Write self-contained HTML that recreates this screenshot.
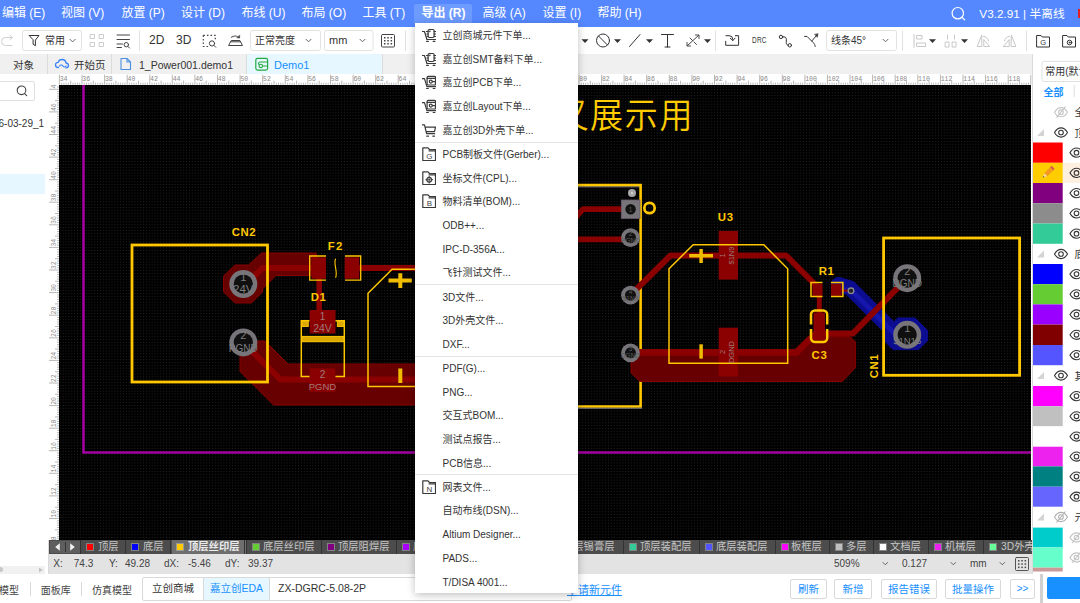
<!DOCTYPE html>
<html lang="zh-CN">
<head>
<meta charset="utf-8">
<title>EDA</title>
<style>
*{box-sizing:border-box;margin:0;padding:0}
html,body{width:1080px;height:603px;overflow:hidden;background:#fff}
body{position:relative;font-family:"Liberation Sans","Noto Sans CJK SC",sans-serif;font-size:12px;color:#333}
.abs{position:absolute}
#menubar{left:0;top:0;width:1080px;height:26.500px;background:#5588ff;color:#fff;font-size:12px}
#menubar span{position:absolute;top:0;height:27px;line-height:27.500px;white-space:nowrap}
#toolbar{left:0;top:26.500px;width:1080px;height:27.700px;background:#fff;color:#333}
#toolbar span{position:absolute;top:0;height:27px;line-height:27px;white-space:nowrap}
#tabbar{left:0;top:54.300px;width:1032px;height:20px;background:#f0f0f0;font-size:12px}
#tabbar .tab{position:absolute;top:0;height:20px;line-height:22px;white-space:nowrap;border-right:1px solid #dcdcdc}
#leftpanel{left:0;top:74px;width:49px;height:500px;background:#fff;border-right:1px solid #d9d9d9}
#hruler{left:48px;top:74.300px;width:984px;height:11px;background:#fff;overflow:hidden}
#vruler{left:48px;top:85px;width:11px;height:455px;background:#fff;overflow:hidden}
#canvas{left:59px;top:85px;width:972px;height:455px;background:#000;overflow:hidden}
#layerbar{left:49px;top:540px;width:983px;height:13.500px;background:#4c4c4c;color:#c6c6c6;font-size:10.300px;overflow:hidden}
#layerbar span{position:absolute;top:0;height:14px;line-height:14px;white-space:nowrap}
#layerbar i{position:absolute;top:3.600px;width:6.400px;height:6.400px;outline:0.500px solid rgba(255,255,255,.3)}
#layerbar b{position:absolute;top:0;width:1px;height:14px;background:#333}
#statusbar{left:49px;top:553.500px;width:983px;height:20px;background:#e3e3e3;font-size:10px;color:#444}
#statusbar span{position:absolute;top:0;height:20px;line-height:19px;white-space:nowrap}
#bottom{left:0;top:574px;width:1080px;height:29px;background:#fff;font-size:12px}
#bottom span{position:absolute;white-space:nowrap}
#bottom .btn{border:1px solid #d9d9d9;color:#1890ff;text-align:center;top:5px;height:20px;line-height:18px;border-radius:2px;background:#fff}
#rightpanel{left:1032px;top:54px;width:48px;height:520px;background:#fff;border-left:1px solid #d9d9d9;overflow:hidden}
#dropdown{left:415px;top:23px;width:163px;height:570px;background:#fff;box-shadow:0 2px 8px rgba(0,0,0,.25);font-size:10px;color:#333}
#dropdown div.it{position:absolute;left:0;width:163px;height:24px;line-height:26px;padding-left:27.5px;white-space:nowrap}
#dropdown svg.ic{position:absolute;left:7px;top:5px;fill:none;stroke:#3a3a3a;stroke-width:1.200;stroke-linecap:round;stroke-linejoin:round}
#dropdown div.sep{position:absolute;left:0;width:163px;height:1px;background:#e4e4e4}
</style>
</head>
<body>
<div id="menubar" class="abs">
<span style="left:2px">编辑 (E)</span>
<span style="left:61px">视图 (V)</span>
<span style="left:121.500px">放置 (P)</span>
<span style="left:181px">设计 (D)</span>
<span style="left:241.500px">布线 (U)</span>
<span style="left:301.500px">布局 (O)</span>
<span style="left:362.500px">工具 (T)</span>
<span style="left:414px;width:57.500px;top:4px;height:20px;background:#6e9bff;border-radius:2px"></span>
<span style="left:421.500px;font-weight:bold">导出 (R)</span>
<span style="left:482.500px">高级 (A)</span>
<span style="left:542.500px">设置 (I)</span>
<span style="left:597.500px">帮助 (H)</span>
<span style="left:979.300px;font-size:11.750px">V3.2.91 | 半离线</span>
<svg class="abs" style="left:948px;top:4px" width="20" height="20" viewBox="948 4 20 20" fill="none" stroke="#fff" stroke-width="1.200" stroke-linecap="round"><circle cx="957.800" cy="13.200" r="5.700"/><path d="M962 17.400l2.600 2.400"/></svg>
<span style="left:1077.500px;top:9px;width:3px;height:8.500px;background:#e02020"></span>

</div><!--/menubar-->
<div id="toolbar" class="abs">
<svg class="abs" style="left:0;top:0" width="1080" height="27" viewBox="0 27 1080 27" fill="none" stroke="#333" stroke-width="1" stroke-linecap="round" stroke-linejoin="round">
<!-- redo (disabled) -->
<path d="M12 37.500H5.500a4 4 0 0 0 0 8H12M9.800 35.200l2.600 2.300l-2.600 2.300" stroke="#cfcfcf"/>
<!-- filter box -->
<rect x="22.5" y="30.5" width="59" height="20" rx="2" stroke="#e2e2e2" fill="#fff"/>
<path d="M29.5 35.5h9.5l-3.6 4.6v5.6l-2.3-1.4v-4.2z" stroke="#333"/>
<path d="M70 39.3l2.6 2.6l2.6-2.6" stroke="#555" stroke-width="0.9"/>
<!-- 4 squares (disabled) -->
<g stroke="#ccc"><rect x="90.5" y="34.5" width="4" height="4"/><rect x="99.5" y="34.5" width="4" height="4"/><rect x="90.5" y="42.5" width="4" height="4"/><rect x="99.5" y="42.5" width="4" height="4"/></g>
<!-- list search -->
<path d="M117 35h12.5M117 39.5h12.5M117 44h5.5M117 47.5h4.5" stroke="#444"/><circle cx="126.3" cy="44.7" r="2.2" stroke="#444"/><path d="M128 46.5l1.5 1.5" stroke="#444"/>
<path d="M139.5 31v19.5" stroke="#e0e0e0"/>
<!-- dashed rect search -->
<path d="M203.300 35.300h12v5M203.300 35.300v11.200h5" stroke="#444" stroke-dasharray="1.600 2" stroke-linecap="butt" stroke-width="1.200"/><circle cx="212" cy="43.400" r="2.600" stroke="#444"/><path d="M214 45.500l1.700 1.700" stroke="#444"/>
<!-- stamp -->
<path d="M231.600 40.500h8.300l2.600 5h-13.500zM231 41.800h9.500" stroke="#444"/><path d="M231.300 37.300c2.500-1.800 5.500-1.800 8 0.200" stroke="#444"/><path d="M239.700 35.300v2.600h-2.600z" fill="#444" stroke="#444" stroke-width="0.500"/>
<!-- selects -->
<rect x="250.500" y="30.500" width="70" height="20" rx="2" stroke="#e2e2e2"/>
<path d="M306 39.300l2.500 2.500l2.500-2.500" stroke="#555" stroke-width="0.9"/>
<rect x="324.500" y="30.500" width="48.500" height="20" rx="2" stroke="#e2e2e2"/>
<path d="M360 39.300l2.500 2.500l2.500-2.500" stroke="#555" stroke-width="0.9"/>
<!-- grid icon -->
<rect x="381.500" y="34.500" width="13" height="12.500" rx="1" stroke="#444"/>
<g fill="#444" stroke="none"><rect x="384" y="37" width="1.500" height="1.500"/><rect x="387.300" y="37" width="1.500" height="1.500"/><rect x="390.600" y="37" width="1.500" height="1.500"/><rect x="384" y="40" width="1.500" height="1.500"/><rect x="387.300" y="40" width="1.500" height="1.500"/><rect x="390.600" y="40" width="1.500" height="1.500"/><rect x="384" y="43" width="1.500" height="1.500"/><rect x="387.300" y="43" width="1.500" height="1.500"/><rect x="390.600" y="43" width="1.500" height="1.500"/></g>
<path d="M405.500 31v19.500" stroke="#e0e0e0"/>
<!-- right part -->
<g fill="#333" stroke="none"><path d="M581.5 39.300h7l-3.500 3.800z"/><path d="M614 39.300h7l-3.500 3.800z"/><path d="M646 39.300h7l-3.500 3.800z"/><path d="M704 39.300h7l-3.500 3.800z"/><path d="M929 39.300h7l-3.500 3.800z"/><path d="M961 39.300h7l-3.500 3.800z"/></g>
<circle cx="603" cy="40.500" r="6.500" stroke="#333"/><path d="M598.500 36l9 9" stroke="#333"/>
<path d="M629.500 46.500l10.500-12" stroke="#333"/>
<path d="M661.500 34.500h12M667.500 34.500v12.500M665 47h5" stroke="#333"/>
<path d="M687.500 45.500l11-10M687 42.500v3.500h3.500M695.500 35h3.500v3.500M690 38l2.500 2.500M694 42l2.500 2.500" stroke="#333" stroke-width="0.9"/>
<path d="M715.500 31v19.500" stroke="#e0e0e0"/>
<path d="M725.700 41.300V45.300H738.600V35.700H735.400M726 35.700h3a3.800 3.800 0 0 1 3.800 3.800v0.800M730.300 38.300l2.500 2.300l2.300-2.500" stroke="#333"/>
<path d="M782.700 36.900h1.300c1.500 0 2.300 0.800 2.300 2.300v3.500c0 1.600 0.800 2.500 1.900 2.600" stroke="#333"/><circle cx="781" cy="36.900" r="1.700" stroke="#333"/><circle cx="789.800" cy="45.300" r="1.700" stroke="#333"/>
<path d="M804.600 36.400h2.400l6.300 6.300c1.200 1.200 1.700 2.300 1.900 3.800M811.800 41l5-5.800" stroke="#333"/><path d="M818 33.900l-0.600 3.400l-2.700-2.700z" fill="#333" stroke="#333" stroke-width="0.500"/>
<rect x="826.500" y="30.500" width="70" height="20" rx="2" stroke="#e2e2e2"/>
<path d="M883 39.300l2.500 2.500l2.500-2.500" stroke="#555" stroke-width="0.9"/>
<path d="M902.500 31v19.500" stroke="#e0e0e0"/>
<g stroke="#c8c8c8"><path d="M914 34.500v13"/><rect x="917" y="35.500" width="5" height="3.500"/><rect x="917" y="43" width="8.500" height="3.500"/>
<path d="M947.500 35v4M954.500 35v4"/><rect x="945.500" y="42" width="3.500" height="5"/><rect x="952.500" y="42" width="3.500" height="5"/>
<path d="M981.500 35.500l-4.300 11h4.300zM983.800 40v6.500h5.500z"/><path d="M983.300 36.200c2.800 0.300 4.800 2.200 5.300 4.800"/>
<path d="M1011.500 35.500l4.300 11h-4.300zM1009.200 40v6.500h-5.500z"/><path d="M1009.700 36.200c-2.800 0.300-4.800 2.200-5.300 4.800"/></g>
<path d="M1026.500 31v19.500" stroke="#e0e0e0"/>
<path d="M1037 35.500h4l1.200 1.500h7.300v10h-12.500z" stroke="#333"/>
<path d="M1063 35.500h4l1.200 1.500h7.300v10h-12.500z" stroke="#333"/><circle cx="1069.500" cy="42.500" r="2.300" stroke="#333"/><circle cx="1069.500" cy="42.500" r="0.500" stroke="#333"/>
</svg>
<span style="left:45px;font-size:10px">常用</span>
<span style="left:149px;font-size:12px;letter-spacing:0.2px;color:#333">2D</span>
<span style="left:176px;font-size:12px;letter-spacing:0.2px;color:#333">3D</span>
<span style="left:255px;font-size:10px">正常亮度</span>
<span style="left:329px;font-size:11px">mm</span>
<span style="left:751.800px;font-size:9px;transform:scaleX(0.720);transform-origin:0 50%;font-family:'Liberation Sans',sans-serif;letter-spacing:0.300px">DRC</span>
<span style="left:831px;font-size:10px">线条45°</span>
<span style="left:1040.300px;font-size:7.500px;top:2.500px">G</span>

</div><!--/toolbar-->
<div id="tabbar" class="abs">
<div class="tab" style="left:0;width:48px;text-align:center;font-size:10.500px">对象</div>
<div class="tab" style="left:48px;width:64px;font-size:10.500px;padding-left:26px">开始页</div>
<div class="tab" style="left:112px;width:135px;font-size:10.500px;padding-left:27px">1_Power001.demo1</div>
<div class="tab" style="left:247px;width:136px;font-size:11px;padding-left:27px;background:#e6f7ff;color:#1890ff">Demo1</div>
<svg class="abs" style="left:0;top:0" width="400" height="20" viewBox="0 54 400 20" fill="none" stroke-linecap="round" stroke-linejoin="round">
<path d="M58.500 67.500c-2 0-3-1.200-3-2.600c0-1.500 1.200-2.600 2.700-2.500c0.500-1.800 2-2.900 3.800-2.900c2.200 0 3.800 1.500 4 3.500c1.500 0.200 2.500 1.200 2.500 2.500c0 1.400-1.200 2.300-2.500 2.300" stroke="#3b82f6" stroke-width="1.300"/>
<path d="M59.500 66c1-1.300 2.600-1.300 3.400 0c0.800 1.300 2.300 1.300 3.200 0" stroke="#3b82f6" stroke-width="1.200"/>
<path d="M121 58.500h6l3.500 3.500v7.500h-9.500z M127 58.500v3.500h3.500" stroke="#4a90e2" stroke-width="1.100"/>
<rect x="255.800" y="58.300" width="11.800" height="11.800" rx="1.800" stroke="#22aa44" stroke-width="1.200"/>
<path d="M267.600 62H260.300a1.800 1.800 0 0 0-1.800 1.800v0.500" stroke="#22aa44" stroke-width="1.100"/><circle cx="260.800" cy="66" r="1.700" stroke="#22aa44" stroke-width="1.100"/><path d="M262.600 66h5" stroke="#22aa44" stroke-width="1.100"/>
</svg>

</div><!--/tabbar-->
<div id="leftpanel" class="abs">
<div class="abs" style="left:-4px;top:7px;width:39px;height:20px;border:1px solid #e0e0e0;border-radius:2px"></div>
<svg class="abs" style="left:15px;top:10px" width="14" height="14" viewBox="0 0 14 14" fill="none" stroke="#444" stroke-width="1.100" stroke-linecap="round"><circle cx="6.500" cy="6.300" r="4.300"/><path d="M9.700 9.600l2 2"/></svg>
<div class="abs" style="left:-1.500px;top:43.500px;font-size:10px;line-height:12px;white-space:nowrap;color:#333">6-03-29_1</div>
<div class="abs" style="left:0;top:100px;width:45px;height:20px;background:#e6f7ff"></div>
<div class="abs" style="left:0;top:491.500px;width:45px;height:8px;background:#f1f1f1"></div>
<div class="abs" style="left:-3px;top:493px;width:5.500px;height:5px;background:#c8c8c8;border-radius:3px"></div>
<svg class="abs" style="left:38px;top:492.500px" width="6" height="6" viewBox="0 0 6 6"><path d="M1 0.500v5l4-2.500z" fill="#c4c4c4"/></svg>

</div><!--/leftpanel-->
<div id="hruler" class="abs">
<svg class="abs" style="left:0;top:0" width="984" height="11" viewBox="48 74.3 984 11" font-family="Liberation Mono,monospace" font-size="6.5" fill="#888">
<path d="M59.4 85v-10M61.7 85v-2M63.9 85v-2M66.2 85v-2M68.4 85v-2M70.7 85v-4M73.0 85v-2M75.2 85v-2M77.5 85v-2M79.7 85v-2M82.0 85v-10M84.2 85v-2M86.5 85v-2M88.8 85v-2M91.0 85v-2M93.3 85v-4M95.5 85v-2M97.8 85v-2M100.1 85v-2M102.3 85v-2M104.6 85v-10M106.8 85v-2M109.1 85v-2M111.4 85v-2M113.6 85v-2M115.9 85v-4M118.1 85v-2M120.4 85v-2M122.7 85v-2M124.9 85v-2M127.2 85v-10M129.4 85v-2M131.7 85v-2M133.9 85v-2M136.2 85v-2M138.5 85v-4M140.7 85v-2M143.0 85v-2M145.2 85v-2M147.5 85v-2M149.8 85v-10M152.0 85v-2M154.3 85v-2M156.5 85v-2M158.8 85v-2M161.1 85v-4M163.3 85v-2M165.6 85v-2M167.8 85v-2M170.1 85v-2M172.3 85v-10M174.6 85v-2M176.9 85v-2M179.1 85v-2M181.4 85v-2M183.6 85v-4M185.9 85v-2M188.2 85v-2M190.4 85v-2M192.7 85v-2M194.9 85v-10M197.2 85v-2M199.5 85v-2M201.7 85v-2M204.0 85v-2M206.2 85v-4M208.5 85v-2M210.8 85v-2M213.0 85v-2M215.3 85v-2M217.5 85v-10M219.8 85v-2M222.0 85v-2M224.3 85v-2M226.6 85v-2M228.8 85v-4M231.1 85v-2M233.3 85v-2M235.6 85v-2M237.9 85v-2M240.1 85v-10M242.4 85v-2M244.6 85v-2M246.9 85v-2M249.2 85v-2M251.4 85v-4M253.7 85v-2M255.9 85v-2M258.2 85v-2M260.5 85v-2M262.7 85v-10M265.0 85v-2M267.2 85v-2M269.5 85v-2M271.7 85v-2M274.0 85v-4M276.3 85v-2M278.5 85v-2M280.8 85v-2M283.0 85v-2M285.3 85v-10M287.6 85v-2M289.8 85v-2M292.1 85v-2M294.3 85v-2M296.6 85v-4M298.9 85v-2M301.1 85v-2M303.4 85v-2M305.6 85v-2M307.9 85v-10M310.1 85v-2M312.4 85v-2M314.7 85v-2M316.9 85v-2M319.2 85v-4M321.4 85v-2M323.7 85v-2M326.0 85v-2M328.2 85v-2M330.5 85v-10M332.7 85v-2M335.0 85v-2M337.3 85v-2M339.5 85v-2M341.8 85v-4M344.0 85v-2M346.3 85v-2M348.6 85v-2M350.8 85v-2M353.1 85v-10M355.3 85v-2M357.6 85v-2M359.8 85v-2M362.1 85v-2M364.4 85v-4M366.6 85v-2M368.9 85v-2M371.1 85v-2M373.4 85v-2M375.7 85v-10M377.9 85v-2M380.2 85v-2M382.4 85v-2M384.7 85v-2M387.0 85v-4M389.2 85v-2M391.5 85v-2M393.7 85v-2M396.0 85v-2M398.2 85v-10M400.5 85v-2M402.8 85v-2M405.0 85v-2M407.3 85v-2M409.5 85v-4M411.8 85v-2M414.1 85v-2M416.3 85v-2M418.6 85v-2M420.8 85v-10M423.1 85v-2M425.4 85v-2M427.6 85v-2M429.9 85v-2M432.1 85v-4M434.4 85v-2M436.7 85v-2M438.9 85v-2M441.2 85v-2M443.4 85v-10M445.7 85v-2M447.9 85v-2M450.2 85v-2M452.5 85v-2M454.7 85v-4M457.0 85v-2M459.2 85v-2M461.5 85v-2M463.8 85v-2M466.0 85v-10M468.3 85v-2M470.5 85v-2M472.8 85v-2M475.1 85v-2M477.3 85v-4M479.6 85v-2M481.8 85v-2M484.1 85v-2M486.4 85v-2M488.6 85v-10M490.9 85v-2M493.1 85v-2M495.4 85v-2M497.6 85v-2M499.9 85v-4M502.2 85v-2M504.4 85v-2M506.7 85v-2M508.9 85v-2M511.2 85v-10M513.5 85v-2M515.7 85v-2M518.0 85v-2M520.2 85v-2M522.5 85v-4M524.8 85v-2M527.0 85v-2M529.3 85v-2M531.5 85v-2M533.8 85v-10M536.0 85v-2M538.3 85v-2M540.6 85v-2M542.8 85v-2M545.1 85v-4M547.3 85v-2M549.6 85v-2M551.9 85v-2M554.1 85v-2M556.4 85v-10M558.6 85v-2M560.9 85v-2M563.2 85v-2M565.4 85v-2M567.7 85v-4M569.9 85v-2M572.2 85v-2M574.5 85v-2M576.7 85v-2M579.0 85v-10M581.2 85v-2M583.5 85v-2M585.7 85v-2M588.0 85v-2M590.3 85v-4M592.5 85v-2M594.8 85v-2M597.0 85v-2M599.3 85v-2M601.6 85v-10M603.8 85v-2M606.1 85v-2M608.3 85v-2M610.6 85v-2M612.9 85v-4M615.1 85v-2M617.4 85v-2M619.6 85v-2M621.9 85v-2M624.1 85v-10M626.4 85v-2M628.7 85v-2M630.9 85v-2M633.2 85v-2M635.4 85v-4M637.7 85v-2M640.0 85v-2M642.2 85v-2M644.5 85v-2M646.7 85v-10M649.0 85v-2M651.3 85v-2M653.5 85v-2M655.8 85v-2M658.0 85v-4M660.3 85v-2M662.6 85v-2M664.8 85v-2M667.1 85v-2M669.3 85v-10M671.6 85v-2M673.8 85v-2M676.1 85v-2M678.4 85v-2M680.6 85v-4M682.9 85v-2M685.1 85v-2M687.4 85v-2M689.7 85v-2M691.9 85v-10M694.2 85v-2M696.4 85v-2M698.7 85v-2M701.0 85v-2M703.2 85v-4M705.5 85v-2M707.7 85v-2M710.0 85v-2M712.3 85v-2M714.5 85v-10M716.8 85v-2M719.0 85v-2M721.3 85v-2M723.5 85v-2M725.8 85v-4M728.1 85v-2M730.3 85v-2M732.6 85v-2M734.8 85v-2M737.1 85v-10M739.4 85v-2M741.6 85v-2M743.9 85v-2M746.1 85v-2M748.4 85v-4M750.7 85v-2M752.9 85v-2M755.2 85v-2M757.4 85v-2M759.7 85v-10M761.9 85v-2M764.2 85v-2M766.5 85v-2M768.7 85v-2M771.0 85v-4M773.2 85v-2M775.5 85v-2M777.8 85v-2M780.0 85v-2M782.3 85v-10M784.5 85v-2M786.8 85v-2M789.1 85v-2M791.3 85v-2M793.6 85v-4M795.8 85v-2M798.1 85v-2M800.4 85v-2M802.6 85v-2M804.9 85v-10M807.1 85v-2M809.4 85v-2M811.6 85v-2M813.9 85v-2M816.2 85v-4M818.4 85v-2M820.7 85v-2M822.9 85v-2M825.2 85v-2M827.5 85v-10M829.7 85v-2M832.0 85v-2M834.2 85v-2M836.5 85v-2M838.8 85v-4M841.0 85v-2M843.3 85v-2M845.5 85v-2M847.8 85v-2M850.0 85v-10M852.3 85v-2M854.6 85v-2M856.8 85v-2M859.1 85v-2M861.3 85v-4M863.6 85v-2M865.9 85v-2M868.1 85v-2M870.4 85v-2M872.6 85v-10M874.9 85v-2M877.2 85v-2M879.4 85v-2M881.7 85v-2M883.9 85v-4M886.2 85v-2M888.5 85v-2M890.7 85v-2M893.0 85v-2M895.2 85v-10M897.5 85v-2M899.7 85v-2M902.0 85v-2M904.3 85v-2M906.5 85v-4M908.8 85v-2M911.0 85v-2M913.3 85v-2M915.6 85v-2M917.8 85v-10M920.1 85v-2M922.3 85v-2M924.6 85v-2M926.9 85v-2M929.1 85v-4M931.4 85v-2M933.6 85v-2M935.9 85v-2M938.2 85v-2M940.4 85v-10M942.7 85v-2M944.9 85v-2M947.2 85v-2M949.4 85v-2M951.7 85v-4M954.0 85v-2M956.2 85v-2M958.5 85v-2M960.7 85v-2M963.0 85v-10M965.3 85v-2M967.5 85v-2M969.8 85v-2M972.0 85v-2M974.3 85v-4M976.6 85v-2M978.8 85v-2M981.1 85v-2M983.3 85v-2M985.6 85v-10M987.8 85v-2M990.1 85v-2M992.4 85v-2M994.6 85v-2M996.9 85v-4M999.1 85v-2M1001.4 85v-2M1003.7 85v-2M1005.9 85v-2M1008.2 85v-10M1010.4 85v-2M1012.7 85v-2M1015.0 85v-2M1017.2 85v-2M1019.5 85v-4M1021.7 85v-2M1024.0 85v-2M1026.3 85v-2M1028.5 85v-2M1030.8 85v-10" stroke="#9a9a9a" stroke-width="0.7" fill="none"/>
<text x="59.7" y="81.3">34</text>
<text x="82.3" y="81.3">36</text>
<text x="104.9" y="81.3">38</text>
<text x="127.5" y="81.3">40</text>
<text x="150.1" y="81.3">42</text>
<text x="172.7" y="81.3">44</text>
<text x="195.2" y="81.3">46</text>
<text x="217.8" y="81.3">48</text>
<text x="240.4" y="81.3">50</text>
<text x="263.0" y="81.3">52</text>
<text x="285.6" y="81.3">54</text>
<text x="308.2" y="81.3">56</text>
<text x="330.8" y="81.3">58</text>
<text x="353.4" y="81.3">60</text>
<text x="376.0" y="81.3">62</text>
<text x="398.5" y="81.3">64</text>
<text x="421.1" y="81.3">66</text>
<text x="443.7" y="81.3">68</text>
<text x="466.3" y="81.3">70</text>
<text x="488.9" y="81.3">72</text>
<text x="511.5" y="81.3">74</text>
<text x="534.1" y="81.3">76</text>
<text x="556.7" y="81.3">78</text>
<text x="579.3" y="81.3">80</text>
<text x="601.9" y="81.3">82</text>
<text x="624.4" y="81.3">84</text>
<text x="647.0" y="81.3">86</text>
<text x="669.6" y="81.3">88</text>
<text x="692.2" y="81.3">90</text>
<text x="714.8" y="81.3">92</text>
<text x="737.4" y="81.3">94</text>
<text x="760.0" y="81.3">96</text>
<text x="782.6" y="81.3">98</text>
<text x="805.2" y="81.3">100</text>
<text x="827.8" y="81.3">102</text>
<text x="850.4" y="81.3">104</text>
<text x="872.9" y="81.3">106</text>
<text x="895.5" y="81.3">108</text>
<text x="918.1" y="81.3">110</text>
<text x="940.7" y="81.3">112</text>
<text x="963.3" y="81.3">114</text>
<text x="985.9" y="81.3">116</text>
<text x="1008.5" y="81.3">118</text>
</svg>
</div><!--/hruler-->
<div id="vruler" class="abs">
<svg class="abs" style="left:0;top:0" width="11" height="455" viewBox="48 85 11 455" font-family="Liberation Mono,monospace" font-size="6.5" fill="#888">
<path d="M59 87.0h-2M59 89.3h-10M59 91.6h-2M59 93.8h-2M59 96.1h-2M59 98.3h-2M59 100.6h-4M59 102.9h-2M59 105.1h-2M59 107.4h-2M59 109.6h-2M59 111.9h-10M59 114.1h-2M59 116.4h-2M59 118.7h-2M59 120.9h-2M59 123.2h-4M59 125.4h-2M59 127.7h-2M59 130.0h-2M59 132.2h-2M59 134.5h-10M59 136.7h-2M59 139.0h-2M59 141.3h-2M59 143.5h-2M59 145.8h-4M59 148.0h-2M59 150.3h-2M59 152.6h-2M59 154.8h-2M59 157.1h-10M59 159.3h-2M59 161.6h-2M59 163.8h-2M59 166.1h-2M59 168.4h-4M59 170.6h-2M59 172.9h-2M59 175.1h-2M59 177.4h-2M59 179.7h-10M59 181.9h-2M59 184.2h-2M59 186.4h-2M59 188.7h-2M59 191.0h-4M59 193.2h-2M59 195.5h-2M59 197.7h-2M59 200.0h-2M59 202.2h-10M59 204.5h-2M59 206.8h-2M59 209.0h-2M59 211.3h-2M59 213.5h-4M59 215.8h-2M59 218.1h-2M59 220.3h-2M59 222.6h-2M59 224.8h-10M59 227.1h-2M59 229.4h-2M59 231.6h-2M59 233.9h-2M59 236.1h-4M59 238.4h-2M59 240.7h-2M59 242.9h-2M59 245.2h-2M59 247.4h-10M59 249.7h-2M59 251.9h-2M59 254.2h-2M59 256.5h-2M59 258.7h-4M59 261.0h-2M59 263.2h-2M59 265.5h-2M59 267.8h-2M59 270.0h-10M59 272.3h-2M59 274.5h-2M59 276.8h-2M59 279.1h-2M59 281.3h-4M59 283.6h-2M59 285.8h-2M59 288.1h-2M59 290.4h-2M59 292.6h-10M59 294.9h-2M59 297.1h-2M59 299.4h-2M59 301.6h-2M59 303.9h-4M59 306.2h-2M59 308.4h-2M59 310.7h-2M59 312.9h-2M59 315.2h-10M59 317.5h-2M59 319.7h-2M59 322.0h-2M59 324.2h-2M59 326.5h-4M59 328.8h-2M59 331.0h-2M59 333.3h-2M59 335.5h-2M59 337.8h-10M59 340.0h-2M59 342.3h-2M59 344.6h-2M59 346.8h-2M59 349.1h-4M59 351.3h-2M59 353.6h-2M59 355.9h-2M59 358.1h-2M59 360.4h-10M59 362.6h-2M59 364.9h-2M59 367.2h-2M59 369.4h-2M59 371.7h-4M59 373.9h-2M59 376.2h-2M59 378.5h-2M59 380.7h-2M59 383.0h-10M59 385.2h-2M59 387.5h-2M59 389.7h-2M59 392.0h-2M59 394.3h-4M59 396.5h-2M59 398.8h-2M59 401.0h-2M59 403.3h-2M59 405.6h-10M59 407.8h-2M59 410.1h-2M59 412.3h-2M59 414.6h-2M59 416.9h-4M59 419.1h-2M59 421.4h-2M59 423.6h-2M59 425.9h-2M59 428.2h-10M59 430.4h-2M59 432.7h-2M59 434.9h-2M59 437.2h-2M59 439.4h-4M59 441.7h-2M59 444.0h-2M59 446.2h-2M59 448.5h-2M59 450.7h-10M59 453.0h-2M59 455.3h-2M59 457.5h-2M59 459.8h-2M59 462.0h-4M59 464.3h-2M59 466.6h-2M59 468.8h-2M59 471.1h-2M59 473.3h-10M59 475.6h-2M59 477.8h-2M59 480.1h-2M59 482.4h-2M59 484.6h-4M59 486.9h-2M59 489.1h-2M59 491.4h-2M59 493.7h-2M59 495.9h-10M59 498.2h-2M59 500.4h-2M59 502.7h-2M59 505.0h-2M59 507.2h-4M59 509.5h-2M59 511.7h-2M59 514.0h-2M59 516.3h-2M59 518.5h-10M59 520.8h-2M59 523.0h-2M59 525.3h-2M59 527.5h-2M59 529.8h-4M59 532.1h-2M59 534.3h-2M59 536.6h-2M59 538.8h-2" stroke="#9a9a9a" stroke-width="0.7" fill="none"/>
<text transform="translate(56,88.5) rotate(-90)">48</text>
<text transform="translate(56,111.1) rotate(-90)">46</text>
<text transform="translate(56,133.7) rotate(-90)">44</text>
<text transform="translate(56,156.3) rotate(-90)">42</text>
<text transform="translate(56,178.9) rotate(-90)">40</text>
<text transform="translate(56,201.4) rotate(-90)">38</text>
<text transform="translate(56,224.0) rotate(-90)">36</text>
<text transform="translate(56,246.6) rotate(-90)">34</text>
<text transform="translate(56,269.2) rotate(-90)">32</text>
<text transform="translate(56,291.8) rotate(-90)">30</text>
<text transform="translate(56,314.4) rotate(-90)">28</text>
<text transform="translate(56,337.0) rotate(-90)">26</text>
<text transform="translate(56,359.6) rotate(-90)">24</text>
<text transform="translate(56,382.2) rotate(-90)">22</text>
<text transform="translate(56,404.8) rotate(-90)">20</text>
<text transform="translate(56,427.3) rotate(-90)">18</text>
<text transform="translate(56,449.9) rotate(-90)">16</text>
<text transform="translate(56,472.5) rotate(-90)">14</text>
<text transform="translate(56,495.1) rotate(-90)">12</text>
<text transform="translate(56,517.7) rotate(-90)">10</text>
<text transform="translate(56,540.3) rotate(-90)">8</text>
</svg>
</div><!--/vruler-->
<div id="canvas" class="abs">
<svg class="abs" style="left:0;top:0" width="972" height="455" viewBox="59 85 972 455" font-family="Liberation Sans,'Noto Sans CJK SC',sans-serif">
<defs>
<pattern id="grid" x="59.8" y="89.3" width="2.87" height="2.87" patternUnits="userSpaceOnUse"><rect x="0" y="0" width="1" height="1" fill="#222"/></pattern>
</defs>
<rect x="59" y="85" width="972" height="455" fill="#000"/>
<rect x="59" y="85" width="972" height="455" fill="url(#grid)"/>
<!-- board outline -->
<path d="M83.500 85V452.500H1031" fill="none" stroke="#a000a0" stroke-width="2.600"/>
<!-- title -->
<text transform="translate(555.400,127.800) scale(0.930,1)" font-size="35.500" fill="#ffcc00" font-weight="350" letter-spacing="1.800">又展示用</text>
<!-- LEFT: CN2 copper -->
<g id="cuL" fill="none" stroke-linejoin="miter" stroke-linecap="butt">
<path d="M235 265h13.500l13-12H316.400V275.500H276l-13.500 13.500v3l-11 11h-16.500l-11.500-11v-16z" fill="#670000" stroke="#860000" stroke-width="1"/>
<path d="M245 286L262.500 268H318" stroke="#8b0000" stroke-width="6"/>
<path d="M352 268H416" stroke="#8b0000" stroke-width="6"/>
<path d="M319.200 270V320" stroke="#8b0000" stroke-width="5.500"/>
<path d="M240 341V371.500L273.500 405H420V364H288L265 341Z" fill="#670000" stroke="#860000" stroke-width="1"/>
<path d="M243.200 342.400L280.400 379.600H420" stroke="#8b0000" stroke-width="6" />
</g>
<!-- pads CN2 -->
<g>
<circle cx="243.300" cy="284" r="14" fill="#77747a"/><circle cx="243.300" cy="284" r="9.600" fill="#101010"/>
<circle cx="243.300" cy="342.400" r="14" fill="#77747a"/><circle cx="243.300" cy="342.400" r="9.600" fill="#101010"/>
<g fill="#7e7e7e" text-anchor="middle"><text x="243.300" y="281" font-size="11">1</text><text x="243.300" y="293" font-size="11.500">24V</text><text x="243.300" y="339" font-size="11">2</text><text x="243.300" y="352" font-size="10">PGND</text></g>
</g>
<!-- CN2 outline -->
<rect x="132" y="245" width="135.500" height="137" fill="none" stroke="#ffc800" stroke-width="2.800"/>
<text x="244" y="235.500" font-size="11.400" font-weight="bold" fill="#ffc800" text-anchor="middle" letter-spacing="0.500">CN2</text>
<!-- F2 -->
<rect x="311.500" y="257.200" width="14.500" height="21.600" fill="#8b0000"/><rect x="344.700" y="257.200" width="14.600" height="21.600" fill="#8b0000"/>
<path d="M326 256H309.700V280.200H326M345 256H360.700V280.200H345" fill="none" stroke="#ffc800" stroke-width="1.300"/>
<path d="M335.600 258.700c-2.500 5 2.500 13 0 19" fill="none" stroke="#ffc800" stroke-width="1.100"/>
<text x="335.800" y="249.600" font-size="11.400" font-weight="bold" fill="#ffc800" text-anchor="middle" letter-spacing="1.500">F2</text>
<!-- D1 -->
<rect x="309.700" y="310" width="25.800" height="23.500" fill="#8b0000"/>
<rect x="309.700" y="368.400" width="25.600" height="23.400" fill="#8b0000"/>
<path d="M309.500 320.700H301.300V376.500H309.500M335.500 320.700H344.300V376.500H335.500" fill="none" stroke="#ffc800" stroke-width="1.500"/>
<rect x="301.800" y="336.400" width="42" height="5.300" fill="#dba900" stroke="#ffc800" stroke-width="1"/>
<rect x="301.800" y="321.200" width="6.500" height="5.300" fill="#dba900" stroke="#ffc800" stroke-width="0.900"/><rect x="337.300" y="321.200" width="6.500" height="5.300" fill="#dba900" stroke="#ffc800" stroke-width="0.900"/>
<g fill="#a07a7a" text-anchor="middle"><text x="322.500" y="320" font-size="10">1</text><text x="322.500" y="331.500" font-size="10.500">24V</text><text x="322.500" y="378" font-size="10">2</text><text x="322.500" y="390" font-size="9.500">PGND</text></g>
<text x="318.500" y="300.600" font-size="11.400" font-weight="bold" fill="#ffc800" text-anchor="middle" letter-spacing="0.500">D1</text>
<!-- cap left of menu -->
<path d="M420 269.300H392.100L368 293.300V386.500H420" fill="none" stroke="#ffc800" stroke-width="1.500"/>
<path d="M388.500 280.600H411.800M400.300 273.300V287.900" stroke="#f0bc00" stroke-width="4" fill="none"/>
<path d="M400.300 368.500V383" stroke="#f0bc00" stroke-width="4" fill="none"/>
<!--RIGHT-->
<!-- big box behind menu -->
<path d="M570 186.800H640" stroke="#8a8a8a" stroke-width="1" fill="none"/>
<path d="M570 185H640.600V406.500H570" fill="none" stroke="#ffc800" stroke-width="2.600"/>
<path d="M570 408.200H642" stroke="#8a8a8a" stroke-width="1" fill="none"/>
<!-- blue (bottom layer) -->
<g fill="none" stroke-linejoin="round" stroke-linecap="round">
<path d="M838.500 284.500L850 288L897 335H907" stroke="#0c0c90" stroke-width="15"/>
<path d="M898 318h17l12.600 12.600v10l-9 9h-25.600l-8-8v-10.600z" fill="#0c0c90" stroke="#0c0c90" stroke-width="1"/>
<path d="M840 289L852 291L896 335H907" stroke="#1616ad" stroke-width="5"/>
</g>
<!-- red copper right -->
<g fill="none" stroke-linejoin="miter" stroke-linecap="butt">
<path d="M631 349.500H795L807.900 336.800H850.300L855.600 342.100V367.400L842.300 381.500H640L631 373Z" fill="#670000" stroke="#860000" stroke-width="1"/>
<path d="M576 217L583 209.200H625" stroke="#8b0000" stroke-width="5.700" stroke-linejoin="round"/>
<path d="M575 239.400H625" stroke="#8b0000" stroke-width="5.700"/>
<path d="M630.500 295.200L670.400 255.500H786L819 288.500" stroke="#8b0000" stroke-width="6" stroke-linejoin="round"/>
<path d="M630.500 352.800H796.500L815.800 333.400H853L907.200 278.200" stroke="#8b0000" stroke-width="6" stroke-linejoin="round"/>
<path d="M819.300 290V335" stroke="#8b0000" stroke-width="5"/>
<path d="M838 290.600H849" stroke="#8b0000" stroke-width="2"/>
</g>
<!-- pads in box -->
<circle cx="632" cy="193" r="4" fill="#a8a8a8"/><circle cx="632" cy="193" r="1" fill="#ddd"/>
<rect x="621.300" y="200" width="18.700" height="18.400" fill="#77747a" stroke="#6a5a70" stroke-width="0.800"/><circle cx="630.600" cy="209.300" r="5.200" fill="#111"/>
<circle cx="649.500" cy="208" r="5.200" fill="none" stroke="#ffc800" stroke-width="2.700"/>
<circle cx="630.500" cy="237.700" r="9.400" fill="#77747a"/><circle cx="630.500" cy="237.700" r="5.500" fill="#111"/>
<circle cx="630.500" cy="295.200" r="9.400" fill="#77747a"/><circle cx="630.500" cy="295.200" r="5.500" fill="#111"/>
<circle cx="630.500" cy="352.800" r="9.400" fill="#77747a"/><circle cx="630.500" cy="352.800" r="5.500" fill="#111"/>
<g fill="#5c5c5c" text-anchor="middle" font-size="6.500"><text x="630.500" y="236">2</text><text x="630.500" y="243">PGND</text><text x="630.500" y="293.500">4</text><text x="630.500" y="300.500">$1N9</text><text x="630.500" y="351">5</text><text x="630.500" y="358">DGND</text><text x="630.500" y="211.500">1</text></g>
<!-- U3 -->
<rect x="718.700" y="230.900" width="19.300" height="48.700" fill="#8b0000"/>
<rect x="718.700" y="327.700" width="19.300" height="48.800" fill="#8b0000"/>
<path d="M669 268.700L693.200 244.800H763.800L787.700 268.700V363.200H669Z" fill="none" stroke="#ffc800" stroke-width="1.500"/>
<path d="M689.200 255.700H713M701.100 249V263" stroke="#f0bc00" stroke-width="3.500" fill="none"/>
<path d="M701.100 344.300V358.600" stroke="#f0bc00" stroke-width="3.500" fill="none"/>
<text x="725.800" y="220.600" font-size="11.400" font-weight="bold" fill="#ffc800" text-anchor="middle" letter-spacing="0.800">U3</text>
<g fill="#a07a7a" font-size="7.500" text-anchor="middle"><text transform="translate(725,255.500) rotate(-90)">1</text><text transform="translate(733.500,255.500) rotate(-90)">$1N9</text><text transform="translate(725,352) rotate(-90)">2</text><text transform="translate(733.500,352) rotate(-90)">DGND</text></g>
<!-- R1 -->
<rect x="812.400" y="283.800" width="10.100" height="12" fill="#8b0000"/><rect x="831" y="283.800" width="10.500" height="12" fill="#8b0000"/>
<path d="M822.500 282.500H811V296.600H822.500M831 282.500H842.900V296.600H831" fill="none" stroke="#ffc800" stroke-width="1.500"/>
<text x="826.500" y="275.300" font-size="11.400" font-weight="bold" fill="#ffc800" text-anchor="middle" letter-spacing="0.500">R1</text>
<circle cx="851" cy="290.800" r="2.800" fill="#222" stroke="#8a8a8a" stroke-width="1.300"/>
<!-- C3 -->
<rect x="813.500" y="312.500" width="11.500" height="28" fill="#8b0000"/>
<path d="M811 324.400V314.500a4 4 0 0 1 4-4h8.200a4 4 0 0 1 4 4V324.400M811 328.900V338a4 4 0 0 0 4 4h8.200a4 4 0 0 0 4-4V328.900" fill="none" stroke="#ffc800" stroke-width="2.500"/>
<text x="819.500" y="359.400" font-size="11.400" font-weight="bold" fill="#ffc800" text-anchor="middle" letter-spacing="0.800">C3</text>
<!-- CN1 -->
<circle cx="907.200" cy="278.200" r="14" fill="#77747a"/><circle cx="907.200" cy="278.200" r="9.600" fill="#101010"/>
<circle cx="907.200" cy="334.800" r="14" fill="#77747a"/><circle cx="907.200" cy="334.800" r="9.600" fill="#101010"/>
<g fill="#7e7e7e" text-anchor="middle"><text x="907.200" y="275" font-size="11">2</text><text x="907.200" y="287" font-size="10">DGND</text><text x="907.200" y="331.500" font-size="11">1</text><text x="907.200" y="344" font-size="9.500">$1N15</text></g>
<rect x="883.600" y="238" width="136" height="137.300" fill="none" stroke="#ffc800" stroke-width="2.800"/>
<text transform="translate(878,366) rotate(-90)" font-size="11.400" font-weight="bold" fill="#ffc800" text-anchor="middle" letter-spacing="0.500">CN1</text>
</svg>

</div><!--/canvas-->
<div id="layerbar" class="abs">
<div class="abs" style="left:0.5px;top:0.500px;width:31px;height:12.500px;background:#5e5e5e"></div>
<div class="abs" style="left:15.5px;top:2px;width:1px;height:10px;background:#333"></div>
<svg class="abs" style="left:1px;top:1px" width="30" height="12" viewBox="0 0 30 12"><path d="M9.800 2.300v7.400l-4.600-3.700zM20.200 2.300v7.400l4.600-3.700z" fill="#f2f2f2"/></svg>
<i style="left:38px;background:#ff0000"></i><span style="left:49px">顶层</span>
<i style="left:83px;background:#0000ff"></i><span style="left:94px">底层</span>
<div class="abs" style="left:123px;top:0;width:74px;height:14px;background:#6e6e6e"></div>
<i style="left:128px;background:#ffcc00"></i><span style="left:139px;color:#ececec;font-weight:bold">顶层丝印层</span>
<i style="left:204px;background:#66cc33"></i><span style="left:214px">底层丝印层</span>
<i style="left:279px;background:#800080"></i><span style="left:289px">顶层阻焊层</span>
<i style="left:354px;background:#aa00ff"></i><span style="left:364px">底层阻焊层</span>
<i style="left:429px;background:#808080"></i><span style="left:439px">顶层锡膏层</span>
<i style="left:504px;background:#800000"></i><span style="left:514px">底层锡膏层</span>
<i style="left:581px;background:#33cc99"></i><span style="left:591px">顶层装配层</span>
<i style="left:657px;background:#5555ff"></i><span style="left:667px">底层装配层</span>
<i style="left:733px;background:#ff00ff"></i><span style="left:742px">板框层</span>
<i style="left:787px;background:#c0c0c0"></i><span style="left:797px">多层</span>
<i style="left:831px;background:#ffffff"></i><span style="left:841px">文档层</span>
<i style="left:886px;background:#ee22ee"></i><span style="left:896px">机械层</span>
<i style="left:941px;background:#66ff99"></i><span style="left:952px">3D外壳</span>
<b style="left:30.5px"></b><b style="left:75.5px"></b><b style="left:196.5px"></b><b style="left:271.5px"></b><b style="left:346.5px"></b><b style="left:421.5px"></b><b style="left:496.5px"></b><b style="left:573.5px"></b><b style="left:649.5px"></b><b style="left:725.5px"></b><b style="left:779.5px"></b><b style="left:823.5px"></b><b style="left:878.5px"></b><b style="left:933.5px"></b><b style="left:120.5px"></b><b style="left:195.0px"></b>

</div><!--/layerbar-->
<div id="statusbar" class="abs">
<span style="left:4.3px">X:</span><span style="left:24.8px">74.3</span>
<span style="left:60px">Y:</span><span style="left:76px">49.28</span>
<span style="left:115px">dX:</span><span style="left:139px">-5.46</span>
<span style="left:176px">dY:</span><span style="left:199px">39.37</span>
<span style="left:785px;font-size:10px">509%</span>
<span style="left:853px;font-size:10px">0.127</span>
<span style="left:921px;font-size:10px">mm</span>
<svg class="abs" style="left:829px;top:0" width="154" height="20" viewBox="878 554 154 20" fill="none" stroke="#555" stroke-width="0.900" stroke-linecap="round" stroke-linejoin="round">
<path d="M883 562.500l2.300 2.300l2.300-2.300M951 562.500l2.300 2.300l2.300-2.300M1000 562.500l2.300 2.300l2.300-2.300"/>
<rect x="1015.500" y="557.500" width="13" height="13" rx="1" stroke="#444"/>
<g fill="#444" stroke="none"><rect x="1018" y="560" width="1.500" height="1.500"/><rect x="1021.300" y="560" width="1.500" height="1.500"/><rect x="1024.600" y="560" width="1.500" height="1.500"/><rect x="1018" y="563.300" width="1.500" height="1.500"/><rect x="1021.300" y="563.300" width="1.500" height="1.500"/><rect x="1024.600" y="563.300" width="1.500" height="1.500"/><rect x="1018" y="566.600" width="1.500" height="1.500"/><rect x="1021.300" y="566.600" width="1.500" height="1.500"/><rect x="1024.600" y="566.600" width="1.500" height="1.500"/></g>
</svg>

</div><!--/statusbar-->
<div id="bottom" class="abs">
<span style="left:-1px;top:7.500px;font-size:10px;color:#444">模型</span>
<span style="left:30px;top:8px;width:1px;height:14px;background:#d9d9d9"></span>
<span style="left:40.800px;top:7.500px;font-size:10px;color:#444">面板库</span>
<span style="left:81px;top:8px;width:1px;height:14px;background:#d9d9d9"></span>
<span style="left:92px;top:7.500px;font-size:10px;color:#444">仿真模型</span>
<span style="left:142px;top:3px;width:430px;height:24px;border:1px solid #d9d9d9;border-radius:2px"></span>
<span style="left:143px;top:4px;width:61px;height:22px;line-height:21px;text-align:center;font-size:10.500px;color:#333;border-right:1px solid #d9d9d9">立创商城</span>
<span style="left:204px;top:4px;width:66px;height:22px;line-height:21px;text-align:center;font-size:10.500px;color:#1890ff;background:#e6f7ff;border-right:1px solid #d9d9d9">嘉立创EDA</span>
<span style="left:278px;top:8px;font-size:10.500px;color:#333">ZX-DGRC-5.08-2P</span>
<span style="left:567px;top:6.500px;font-size:11px;color:#1890ff;text-decoration:underline">申请新元件</span>
<span class="btn" style="left:790px;width:37px;font-size:10.500px">刷新</span>
<span class="btn" style="left:834px;width:38px;font-size:10.500px">新增</span>
<span class="btn" style="left:881px;width:56px;font-size:10.500px">报告错误</span>
<span class="btn" style="left:945px;width:56px;font-size:10.500px">批量操作</span>
<span class="btn" style="left:1010px;width:25px;font-size:10px">&gt;&gt;</span>
<span style="left:1040px;top:0;width:3px;height:29px;background:#d0d0d0"></span>
<span style="left:1047px;top:3px;width:40px;height:22px;background:#1890ff;border-radius:2px"></span>

</div><!--/bottom-->
<div id="rightpanel" class="abs">
<svg class="abs" style="left:0;top:0" width="47" height="520" viewBox="1033 54 47 520" font-family="Liberation Sans,'Noto Sans CJK SC',sans-serif">
<rect x="1042" y="61.300" width="60" height="20.200" rx="2" fill="#fff" stroke="#e0e0e0"/>
<text x="1045.200" y="75.300" font-size="10" fill="#333">常用(默认)</text>
<text x="1043.500" y="96" font-size="10" font-weight="bold" fill="#1890ff">全部</text>
<path d="M1074.200 85v12" stroke="#ddd" stroke-width="1"/>
<g transform="translate(1061,112.2)" fill="none" stroke="#c4c4c4" stroke-width="1.100"><path d="M-6.500 0c2-3.400 4.300-4.600 6.500-4.600s4.500 1.200 6.500 4.600c-2 3.400-4.300 4.600-6.500 4.600s-4.500-1.200-6.500-4.600z"/><circle cx="0" cy="0" r="2.300"/></g><path d="M1056.5 117.7L1065.5 106.7" stroke="#c4c4c4" stroke-width="1.100" fill="none"/>
<text x="1074.400" y="116" font-size="10.500" fill="#333">全部</text>
<path d="M1044 129.0v7h-7z" fill="#d4d4d4"/>
<g transform="translate(1061,132.5)" fill="none" stroke="#333" stroke-width="1.100"><path d="M-6.500 0c2-3.400 4.300-4.600 6.500-4.600s4.500 1.200 6.500 4.600c-2 3.400-4.300 4.600-6.500 4.600s-4.500-1.200-6.500-4.600z"/><circle cx="0" cy="0" r="2.300"/></g>
<text x="1074.500" y="136.5" font-size="10.500" fill="#333">顶层</text>
<rect x="1033" y="142.5" width="29.700" height="20.30000000000001" fill="#ff0000"/>
<g transform="translate(1076.5,152.65)" fill="none" stroke="#333" stroke-width="1.100"><path d="M-6.500 0c2-3.400 4.300-4.600 6.500-4.600s4.500 1.200 6.500 4.600c-2 3.400-4.300 4.600-6.500 4.600s-4.500-1.200-6.500-4.600z"/><circle cx="0" cy="0" r="2.300"/></g>
<rect x="1062.700" y="162.8" width="20" height="20.19999999999999" fill="#fdf0e0"/>
<rect x="1033" y="162.8" width="29.700" height="20.19999999999999" fill="#ffcc00"/>
<g transform="translate(1076.5,172.9)" fill="none" stroke="#333" stroke-width="1.100"><path d="M-6.500 0c2-3.400 4.300-4.600 6.500-4.600s4.500 1.200 6.500 4.600c-2 3.400-4.300 4.600-6.500 4.600s-4.500-1.200-6.500-4.600z"/><circle cx="0" cy="0" r="2.300"/></g>
<rect x="1033" y="183" width="29.700" height="20.19999999999999" fill="#800080"/>
<g transform="translate(1076.5,193.1)" fill="none" stroke="#333" stroke-width="1.100"><path d="M-6.500 0c2-3.400 4.300-4.600 6.500-4.600s4.500 1.200 6.500 4.600c-2 3.400-4.300 4.600-6.500 4.600s-4.500-1.200-6.500-4.600z"/><circle cx="0" cy="0" r="2.300"/></g>
<rect x="1033" y="203.2" width="29.700" height="20.30000000000001" fill="#8c8c8c"/>
<g transform="translate(1076.5,213.35)" fill="none" stroke="#333" stroke-width="1.100"><path d="M-6.500 0c2-3.400 4.300-4.600 6.500-4.600s4.500 1.200 6.500 4.600c-2 3.400-4.300 4.600-6.500 4.600s-4.500-1.200-6.500-4.600z"/><circle cx="0" cy="0" r="2.300"/></g>
<rect x="1033" y="223.5" width="29.700" height="20.30000000000001" fill="#33cc99"/>
<g transform="translate(1076.5,233.65)" fill="none" stroke="#333" stroke-width="1.100"><path d="M-6.500 0c2-3.400 4.300-4.600 6.500-4.600s4.500 1.200 6.500 4.600c-2 3.400-4.300 4.600-6.500 4.600s-4.500-1.200-6.500-4.600z"/><circle cx="0" cy="0" r="2.300"/></g>
<g transform="translate(1047.500,173) rotate(45)"><rect x="-2.200" y="-6.500" width="4.400" height="9" fill="#f39a1e"/><rect x="-2.200" y="-8" width="4.400" height="2" fill="#d9534f"/><path d="M-2.200 2.500h4.400l-2.200 4z" fill="#f6d7a6"/><path d="M-0.800 5l0.800 1.500l0.800-1.500z" fill="#333"/></g>
<path d="M1044 250.5v7h-7z" fill="#d4d4d4"/>
<g transform="translate(1061,254)" fill="none" stroke="#333" stroke-width="1.100"><path d="M-6.500 0c2-3.400 4.300-4.600 6.500-4.600s4.500 1.200 6.500 4.600c-2 3.400-4.300 4.600-6.500 4.600s-4.500-1.200-6.500-4.600z"/><circle cx="0" cy="0" r="2.300"/></g>
<text x="1074.500" y="258" font-size="10.500" fill="#333">底层</text>
<rect x="1033" y="264" width="29.700" height="20.19999999999999" fill="#0000ff"/>
<g transform="translate(1076.5,274.1)" fill="none" stroke="#333" stroke-width="1.100"><path d="M-6.500 0c2-3.400 4.300-4.600 6.500-4.600s4.500 1.200 6.500 4.600c-2 3.400-4.300 4.600-6.500 4.600s-4.500-1.200-6.500-4.600z"/><circle cx="0" cy="0" r="2.300"/></g>
<rect x="1033" y="284.2" width="29.700" height="20.19999999999999" fill="#66cc33"/>
<g transform="translate(1076.5,294.29999999999995)" fill="none" stroke="#333" stroke-width="1.100"><path d="M-6.500 0c2-3.400 4.300-4.600 6.500-4.600s4.500 1.200 6.500 4.600c-2 3.400-4.300 4.600-6.500 4.600s-4.500-1.200-6.500-4.600z"/><circle cx="0" cy="0" r="2.300"/></g>
<rect x="1033" y="304.4" width="29.700" height="20.200000000000045" fill="#9900ff"/>
<g transform="translate(1076.5,314.5)" fill="none" stroke="#333" stroke-width="1.100"><path d="M-6.500 0c2-3.400 4.300-4.600 6.500-4.600s4.500 1.200 6.500 4.600c-2 3.400-4.300 4.600-6.500 4.600s-4.500-1.200-6.500-4.600z"/><circle cx="0" cy="0" r="2.300"/></g>
<rect x="1033" y="324.6" width="29.700" height="20.399999999999977" fill="#800000"/>
<g transform="translate(1076.5,334.8)" fill="none" stroke="#333" stroke-width="1.100"><path d="M-6.500 0c2-3.400 4.300-4.600 6.500-4.600s4.500 1.200 6.500 4.600c-2 3.400-4.300 4.600-6.500 4.600s-4.500-1.200-6.500-4.600z"/><circle cx="0" cy="0" r="2.300"/></g>
<rect x="1033" y="345" width="29.700" height="20.19999999999999" fill="#5555ff"/>
<g transform="translate(1076.5,355.1)" fill="none" stroke="#333" stroke-width="1.100"><path d="M-6.500 0c2-3.400 4.300-4.600 6.500-4.600s4.500 1.200 6.500 4.600c-2 3.400-4.300 4.600-6.500 4.600s-4.500-1.200-6.500-4.600z"/><circle cx="0" cy="0" r="2.300"/></g>
<path d="M1044 372.0v7h-7z" fill="#d4d4d4"/>
<g transform="translate(1061,375.5)" fill="none" stroke="#333" stroke-width="1.100"><path d="M-6.500 0c2-3.400 4.300-4.600 6.500-4.600s4.500 1.200 6.500 4.600c-2 3.400-4.300 4.600-6.500 4.600s-4.500-1.200-6.500-4.600z"/><circle cx="0" cy="0" r="2.300"/></g>
<text x="1074.500" y="379.5" font-size="10.500" fill="#333">其他</text>
<rect x="1033" y="386" width="29.700" height="20.19999999999999" fill="#ff00ff"/>
<g transform="translate(1076.5,396.1)" fill="none" stroke="#333" stroke-width="1.100"><path d="M-6.500 0c2-3.400 4.300-4.600 6.500-4.600s4.500 1.200 6.500 4.600c-2 3.400-4.300 4.600-6.500 4.600s-4.500-1.200-6.500-4.600z"/><circle cx="0" cy="0" r="2.300"/></g>
<rect x="1033" y="406.2" width="29.700" height="20.19999999999999" fill="#c0c0c0"/>
<g transform="translate(1076.5,416.29999999999995)" fill="none" stroke="#333" stroke-width="1.100"><path d="M-6.500 0c2-3.400 4.300-4.600 6.500-4.600s4.500 1.200 6.500 4.600c-2 3.400-4.300 4.600-6.500 4.600s-4.500-1.200-6.500-4.600z"/><circle cx="0" cy="0" r="2.300"/></g>
<rect x="1033" y="426.4" width="29.700" height="20.30000000000001" fill="#ffffff"/>
<g transform="translate(1076.5,436.54999999999995)" fill="none" stroke="#333" stroke-width="1.100"><path d="M-6.500 0c2-3.400 4.300-4.600 6.500-4.600s4.500 1.200 6.500 4.600c-2 3.400-4.300 4.600-6.500 4.600s-4.500-1.200-6.500-4.600z"/><circle cx="0" cy="0" r="2.300"/></g>
<rect x="1033" y="446.7" width="29.700" height="19.69999999999999" fill="#ee22ee"/>
<g transform="translate(1076.5,456.54999999999995)" fill="none" stroke="#333" stroke-width="1.100"><path d="M-6.500 0c2-3.400 4.300-4.600 6.500-4.600s4.500 1.200 6.500 4.600c-2 3.400-4.300 4.600-6.500 4.600s-4.500-1.200-6.500-4.600z"/><circle cx="0" cy="0" r="2.300"/></g>
<rect x="1033" y="466.4" width="29.700" height="20.30000000000001" fill="#008080"/>
<g transform="translate(1076.5,476.54999999999995)" fill="none" stroke="#333" stroke-width="1.100"><path d="M-6.500 0c2-3.400 4.300-4.600 6.500-4.600s4.500 1.200 6.500 4.600c-2 3.400-4.300 4.600-6.500 4.600s-4.500-1.200-6.500-4.600z"/><circle cx="0" cy="0" r="2.300"/></g>
<rect x="1033" y="486.7" width="29.700" height="20.0" fill="#6666ff"/>
<g transform="translate(1076.5,496.7)" fill="none" stroke="#333" stroke-width="1.100"><path d="M-6.500 0c2-3.400 4.300-4.600 6.500-4.600s4.500 1.200 6.500 4.600c-2 3.400-4.300 4.600-6.500 4.600s-4.500-1.200-6.500-4.600z"/><circle cx="0" cy="0" r="2.300"/></g>
<path d="M1044 513.5v7h-7z" fill="#d4d4d4"/>
<g transform="translate(1061,517)" fill="none" stroke="#b0b0b0" stroke-width="1.100"><path d="M-6.500 0c2-3.400 4.300-4.600 6.500-4.600s4.500 1.200 6.500 4.600c-2 3.400-4.300 4.600-6.500 4.600s-4.500-1.200-6.500-4.600z"/><circle cx="0" cy="0" r="2.300"/></g><path d="M1056.5 522.5L1065.5 511.5" stroke="#b0b0b0" stroke-width="1.100" fill="none"/>
<text x="1074.500" y="521" font-size="10.500" fill="#333">元件</text>
<rect x="1033" y="527.6" width="29.700" height="19.799999999999955" fill="#00cccc"/>
<g transform="translate(1076.5,537.5)" fill="none" stroke="#c4c4c4" stroke-width="1.100"><path d="M-6.500 0c2-3.400 4.300-4.600 6.500-4.600s4.500 1.200 6.500 4.600c-2 3.400-4.300 4.600-6.500 4.600s-4.500-1.200-6.500-4.600z"/><circle cx="0" cy="0" r="2.300"/></g><path d="M1072.0 543.0L1081.0 532.0" stroke="#c4c4c4" stroke-width="1.100" fill="none"/>
<rect x="1033" y="547.4" width="29.700" height="20.200000000000045" fill="#66ffcc"/>
<g transform="translate(1076.5,557.5)" fill="none" stroke="#c4c4c4" stroke-width="1.100"><path d="M-6.500 0c2-3.400 4.300-4.600 6.500-4.600s4.500 1.200 6.500 4.600c-2 3.400-4.300 4.600-6.500 4.600s-4.500-1.200-6.500-4.600z"/><circle cx="0" cy="0" r="2.300"/></g><path d="M1072.0 563.0L1081.0 552.0" stroke="#c4c4c4" stroke-width="1.100" fill="none"/>
<rect x="1033" y="567.6" width="29.700" height="3.8999999999999773" fill="#cc9999"/>
</svg>
</div><!--/rightpanel-->
<div id="dropdown" class="abs">
<div class="it" style="top:0.0px"><svg class="ic" viewBox="0 0 14 14" width="14" height="14"><path d="M0.300 3.500h2.200l2.400 8h8.900"/><rect x="6.100" y="1.500" width="6" height="8" rx="1.200"/><path d="M12.100 3.500h1.600M12.100 6h1.600M12.100 8.500h1.600M6.100 3.500H4.500M6.100 6H4.900M6.100 8.500H5.300M4.600 13.400h1.700M11.200 13.400h1.700"/><circle cx="7.800" cy="3.300" r="0.300"/></svg>立创商城元件下单...</div>
<div class="it" style="top:24.0px"><svg class="ic" viewBox="0 0 14 14" width="14" height="14"><path d="M0.300 3.500h2.200l2.400 8h8.900"/><rect x="6.100" y="1.500" width="6" height="8" rx="1.200"/><path d="M12.100 3.500h1.600M12.100 6h1.600M12.100 8.500h1.600M6.100 3.500H4.500M6.100 6H4.900M6.100 8.500H5.300M4.600 13.400h1.700M11.200 13.400h1.700"/><circle cx="7.800" cy="3.300" r="0.300"/></svg>嘉立创SMT备料下单...</div>
<div class="it" style="top:47.4px"><svg class="ic" viewBox="0 0 14 14" width="14" height="14"><path d="M0.300 3.600h2.200l2.400 8h8.900"/><rect x="5.100" y="1.400" width="8.400" height="8.600" rx="1"/><path d="M5.100 3.300h8.400"/><circle cx="8.800" cy="6.600" r="1.500"/><path d="M10.300 6.600h3.200M4.600 13.600h1.700M11.200 13.600h1.700"/></svg>嘉立创PCB下单...</div>
<div class="it" style="top:71.2px"><svg class="ic" viewBox="0 0 14 14" width="14" height="14"><path d="M0.300 3.600h2.200l2.400 8h8.900"/><rect x="5.100" y="1.400" width="8.400" height="8.600" rx="1"/><path d="M5.100 3.300h8.400"/><circle cx="8.800" cy="6.600" r="1.500"/><path d="M10.300 6.600h3.200M4.600 13.600h1.700M11.200 13.600h1.700"/></svg>嘉立创Layout下单...</div>
<div class="it" style="top:94.8px"><svg class="ic" viewBox="0 0 14 14" width="14" height="14"><path d="M0.300 1.800h2.200l2.100 8.900h8M3.300 4.200h10.200l-1 4.500H4.400M4.800 13.200h1.700M10.800 13.200h1.700"/></svg>嘉立创3D外壳下单...</div>
<div class="sep" style="top:118.5px"></div>
<div class="it" style="top:119.3px"><svg class="ic" viewBox="0 0 14 14" width="14" height="14"><path d="M0.800 0.900h5.200l1.500 1.600h6v11.100h-12.700zM7 3.800h6.500"/><text x="7.300" y="11.800" font-size="8" text-anchor="middle" fill="#444" stroke="none" font-family="Liberation Sans,sans-serif">G</text></svg>PCB制板文件(Gerber)...</div>
<div class="it" style="top:142.9px"><svg class="ic" viewBox="0 0 14 14" width="14" height="14"><path d="M0.800 0.900h5.200l1.500 1.600h6v11.100h-12.700zM7 3.800h6.500"/><circle cx="7.200" cy="8.700" r="2.300"/><circle cx="7.200" cy="8.700" r="0.500"/><path d="M7.200 5.500v1M7.200 10.900v1M4 8.700h1M9.400 8.700h1"/></svg>坐标文件(CPL)...</div>
<div class="it" style="top:166.4px"><svg class="ic" viewBox="0 0 14 14" width="14" height="14"><path d="M0.800 0.900h5.200l1.500 1.600h6v11.100h-12.700zM7 3.800h6.500"/><text x="7.300" y="11.800" font-size="8" text-anchor="middle" fill="#444" stroke="none" font-family="Liberation Sans,sans-serif">B</text></svg>物料清单(BOM)...</div>
<div class="it" style="top:189.9px">ODB++...</div>
<div class="it" style="top:213.7px">IPC-D-356A...</div>
<div class="it" style="top:237.3px">飞针测试文件...</div>
<div class="sep" style="top:261.0px"></div>
<div class="it" style="top:261.5px">3D文件...</div>
<div class="it" style="top:285.0px">3D外壳文件...</div>
<div class="it" style="top:308.6px">DXF...</div>
<div class="sep" style="top:332.5px"></div>
<div class="it" style="top:333.2px">PDF(G)...</div>
<div class="it" style="top:356.7px">PNG...</div>
<div class="it" style="top:380.2px">交互式BOM...</div>
<div class="it" style="top:404.2px">测试点报告...</div>
<div class="it" style="top:427.6px">PCB信息...</div>
<div class="sep" style="top:450.5px"></div>
<div class="it" style="top:452.3px"><svg class="ic" viewBox="0 0 14 14" width="14" height="14"><path d="M0.800 0.900h5.200l1.500 1.600h6v11.100h-12.700zM7 3.800h6.500"/><text x="7.300" y="11.800" font-size="8" text-anchor="middle" fill="#444" stroke="none" font-family="Liberation Sans,sans-serif">N</text></svg>网表文件...</div>
<div class="it" style="top:475.4px">自动布线(DSN)...</div>
<div class="it" style="top:499.0px">Altium Designer...</div>
<div class="it" style="top:522.6px">PADS...</div>
<div class="it" style="top:546.6px">T/DISA 4001...</div>
</div><!--/dropdown-->
</body>
</html>
